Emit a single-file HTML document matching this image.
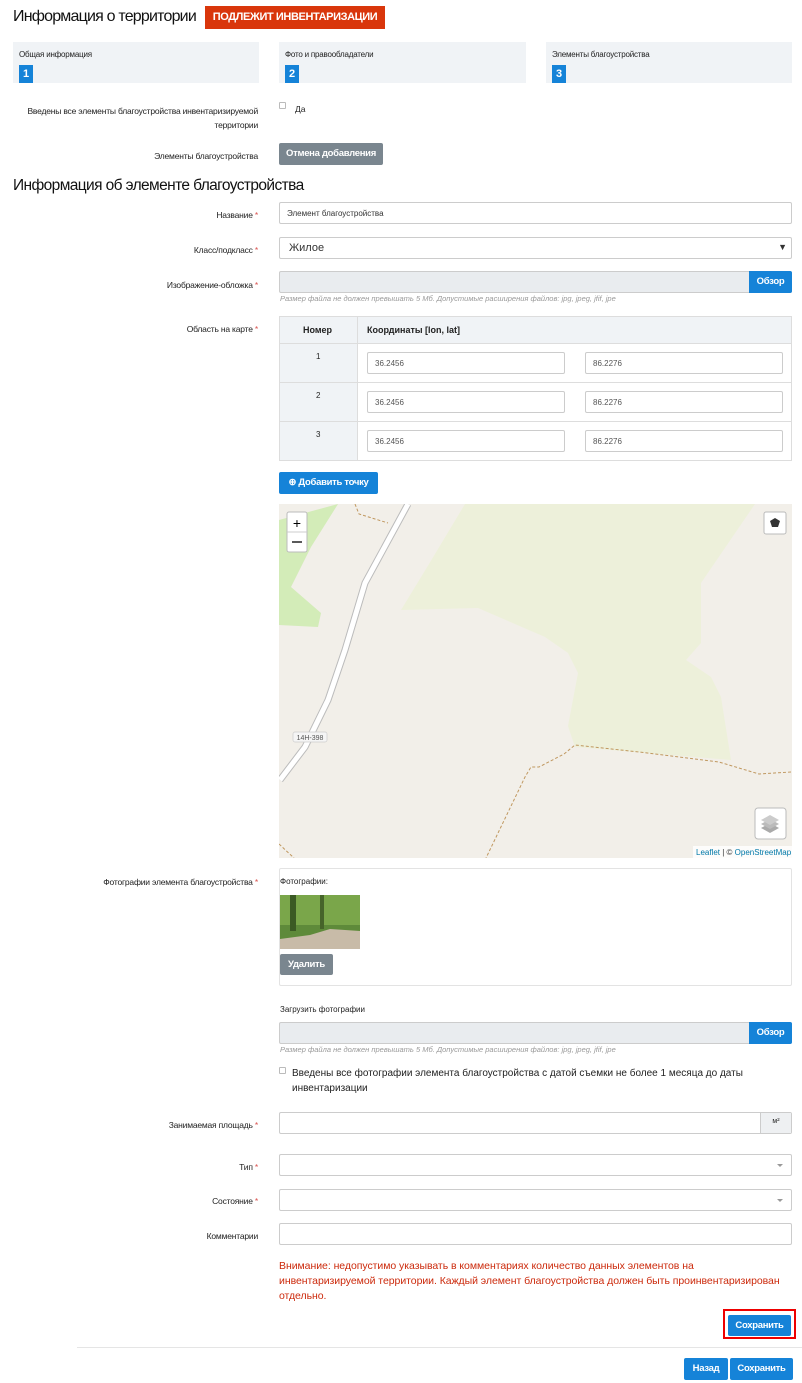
<!DOCTYPE html>
<html><head><meta charset="utf-8"><style>
*{box-sizing:border-box;margin:0;padding:0}
body{width:802px;height:1383px;background:#fff;font-family:"Liberation Sans",sans-serif;color:#222;position:relative;overflow:hidden;font-size:9px}
.a{position:absolute}
.lbl{position:absolute;right:544px;text-align:right;font-size:8.5px;color:#222;letter-spacing:-0.2px}
.lbl i{color:#d9534f;font-style:normal}
.inp{position:absolute;left:279px;width:513px;height:22px;border:1px solid #ccc;border-radius:2px;background:#fff}
.btn{position:absolute;background:#1583d8;color:#fff;font-weight:bold;font-size:9.5px;border-radius:2px;text-align:center;letter-spacing:-0.3px}
.gbtn{position:absolute;background:#7a868f;color:#fff;font-weight:bold;font-size:9.5px;border-radius:2px;text-align:center;letter-spacing:-0.3px}
.step{position:absolute;top:42px;height:41px;background:#f0f3f6;font-size:8px;padding:8px 6px;letter-spacing:-0.2px}
.step b{position:absolute;left:6px;top:23px;width:14px;height:18px;background:#1583d8;color:#fff;font-size:11px;text-align:center;line-height:18px}
.hint{position:absolute;left:280px;font-size:7.5px;font-style:italic;color:#999}
.ci{position:absolute;height:22px;border:1px solid #ccc;border-radius:2px;background:#fff;font-size:8px;color:#555;padding:6px 7px}
.arr{position:absolute;right:8px;top:9px;width:0;height:0;border-left:3px solid transparent;border-right:3px solid transparent;border-top:3px solid #999}
</style></head><body>
<div class="a" style="left:13px;top:8px;font-size:16px;color:#111;letter-spacing:-0.8px;white-space:nowrap">Информация о территории</div>
<div class="a" style="left:205px;top:6px;width:180px;height:23px;background:#d9360b;color:#fff;font-weight:bold;font-size:11px;line-height:23px;text-align:center;letter-spacing:-0.4px">ПОДЛЕЖИТ ИНВЕНТАРИЗАЦИИ</div>
<div class="step" style="left:13px;width:246px">Общая информация<b>1</b></div>
<div class="step" style="left:279px;width:247px">Фото и правообладатели<b>2</b></div>
<div class="step" style="left:546px;width:246px">Элементы благоустройства<b>3</b></div>
<div class="lbl" style="top:104px;line-height:14px;width:260px">Введены все элементы благоустройства инвентаризируемой<br>территории</div>
<div class="a" style="left:279px;top:102px;width:7px;height:7px;border:1px solid #bbb;border-radius:1px"></div>
<div class="a" style="left:295px;top:104px;font-size:8.5px">Да</div>
<div class="lbl" style="top:151px">Элементы благоустройства</div>
<div class="gbtn" style="left:279px;top:143px;width:104px;height:22px;line-height:22px">Отмена добавления</div>
<div class="a" style="left:13px;top:177px;font-size:15.5px;color:#111;letter-spacing:-0.6px">Информация об элементе благоустройства</div>

<div class="lbl" style="top:210px">Название <i>*</i></div>
<div class="inp" style="top:202px;font-size:8px;padding:6px 7px;color:#333">Элемент благоустройства</div>
<div class="lbl" style="top:245px">Класс/подкласс <i>*</i></div>
<div class="inp" style="top:237px;font-size:11px;padding:4px 9px;color:#333">Жилое<span style="position:absolute;right:4px;top:4px;font-size:9px;color:#333">▼</span></div>
<div class="lbl" style="top:280px">Изображение-обложка <i>*</i></div>
<div class="inp" style="top:271px;background:#e9ecef"></div>
<div class="btn" style="left:749px;top:271px;width:43px;height:22px;line-height:22px;border-radius:0 2px 2px 0">Обзор</div>
<div class="hint" style="top:294px">Размер файла не должен превышать 5 Мб. Допустимые расширения файлов: jpg, jpeg, jfif, jpe</div>

<div class="lbl" style="top:324px">Область на карте <i>*</i></div>
<div class="a" style="left:279px;top:316px;width:513px;height:145px;border:1px solid #ddd;background:#f0f3f6"></div>
<div class="a" style="left:357px;top:343px;width:434px;height:117px;background:#fff"></div>
<div class="a" style="left:357px;top:316px;width:1px;height:145px;background:#ddd"></div>
<div class="a" style="left:279px;top:343px;width:513px;height:1px;background:#ddd"></div>
<div class="a" style="left:279px;top:382px;width:513px;height:1px;background:#ddd"></div>
<div class="a" style="left:279px;top:421px;width:513px;height:1px;background:#ddd"></div>
<div class="a" style="left:303px;top:325px;font-weight:bold;font-size:9px">Номер</div>
<div class="a" style="left:367px;top:325px;font-weight:bold;font-size:9px">Координаты [lon, lat]</div>
<div class="a" style="left:316px;top:352px;font-size:8px">1</div>
<div class="a" style="left:316px;top:391px;font-size:8px">2</div>
<div class="a" style="left:316px;top:430px;font-size:8px">3</div>
<div class="ci" style="left:367px;top:352px;width:198px">36.2456</div>
<div class="ci" style="left:585px;top:352px;width:198px">86.2276</div>
<div class="ci" style="left:367px;top:391px;width:198px">36.2456</div>
<div class="ci" style="left:585px;top:391px;width:198px">86.2276</div>
<div class="ci" style="left:367px;top:430px;width:198px">36.2456</div>
<div class="ci" style="left:585px;top:430px;width:198px">86.2276</div>
<div class="btn" style="left:279px;top:472px;width:99px;height:22px;line-height:22px">⊕ Добавить точку</div>

<svg class="a" style="left:279px;top:504px" width="513" height="354" viewBox="0 0 513 354">
<rect width="513" height="354" fill="#f2efe9"/>
<polygon points="186,0 476,0 422,79 422,139 407,156 432,173 442,193 452,256 296,243 289,222 299,169 289,149 266,133 199,104 122,106 150,60" fill="#edf0da"/>
<polygon points="0,16 59,0 32,43 12,83 42,109 39,123 0,121" fill="#d3ecb8"/>
<path d="M129,0 L86,79 L66,146 L49,196 L26,243 L1,276" stroke="#bbb" stroke-width="7" fill="none"/>
<path d="M129,0 L86,79 L66,146 L49,196 L26,243 L1,276" stroke="#fff" stroke-width="5" fill="none"/>
<path d="M76,0 L80,10 L109,19" stroke="#c09860" stroke-width="1" stroke-dasharray="3,2" fill="none"/>
<path d="M512,268 L480,270 L440,258 L360,248 L296,241 L285,250 L260,263 L252,263 L246,273 L207,354" stroke="#c09860" stroke-width="1" stroke-dasharray="3,2" fill="none"/>
<path d="M0,340 L15,354" stroke="#c09860" stroke-width="1" stroke-dasharray="3,2" fill="none"/>
<rect x="14" y="228" width="34" height="10" rx="2" fill="#f5f5f5" stroke="#ccc" stroke-width="0.7"/>
<text x="31" y="236" font-size="7" text-anchor="middle" fill="#555" font-family="Liberation Sans">14H-398</text>
<rect x="8" y="8" width="20" height="40" rx="2" fill="#fff" stroke="#bbb"/>
<line x1="8" y1="28" x2="28" y2="28" stroke="#ccc"/>
<text x="18" y="24" font-size="14" text-anchor="middle" fill="#000" font-family="Liberation Sans">+</text>
<line x1="13" y1="38" x2="23" y2="38" stroke="#000" stroke-width="1.3"/>
<rect x="485" y="8" width="22" height="22" rx="2" fill="#fff" stroke="#bbb"/>
<polygon points="496,14 501,17 499,23 493,23 491,17" fill="#333"/>
<rect x="476" y="304" width="31" height="31" rx="3" fill="#fff" stroke="#bbb"/>
<path d="M482,324 L491,329 L500,324 L491,319Z" fill="#aaa"/>
<path d="M482,320 L491,325 L500,320 L491,315Z" fill="#bbb"/>
<path d="M482,316 L491,321 L500,316 L491,311Z" fill="#ccc"/>
<rect x="414" y="342" width="99" height="12" fill="#fff" opacity="0.8"/>
<text x="417" y="351" font-size="8" fill="#0078a8" font-family="Liberation Sans">Leaflet <tspan fill="#333">| © </tspan>OpenStreetMap</text>
</svg>

<div class="lbl" style="top:877px">Фотографии элемента благоустройства <i>*</i></div>
<div class="a" style="left:279px;top:868px;width:513px;height:118px;border:1px solid #e3e3e3;border-radius:2px"></div>
<div class="a" style="left:280px;top:877px;font-size:8px">Фотографии:</div>
<svg class="a" style="left:280px;top:895px" width="80" height="54">
<rect width="80" height="54" fill="#5e8a3a"/>
<rect x="0" y="0" width="80" height="30" fill="#7aa64a"/>
<rect x="10" y="0" width="6" height="36" fill="#3b5a24"/><rect x="40" y="0" width="4" height="34" fill="#46642a"/>
<polygon points="0,54 80,54 80,36 50,34 30,40 0,44" fill="#c8bba8"/>
</svg>
<div class="gbtn" style="left:280px;top:954px;width:53px;height:21px;line-height:21px">Удалить</div>
<div class="a" style="left:280px;top:1005px;font-size:8px">Загрузить фотографии</div>
<div class="inp" style="top:1022px;background:#e9ecef"></div>
<div class="btn" style="left:749px;top:1022px;width:43px;height:22px;line-height:22px;border-radius:0 2px 2px 0">Обзор</div>
<div class="hint" style="top:1045px">Размер файла не должен превышать 5 Мб. Допустимые расширения файлов: jpg, jpeg, jfif, jpe</div>
<div class="a" style="left:279px;top:1067px;width:7px;height:7px;border:1px solid #bbb;border-radius:1px"></div>
<div class="a" style="left:292px;top:1066px;font-size:10px;line-height:15px;color:#222">Введены все фотографии элемента благоустройства с датой съемки не более 1 месяца до даты<br>инвентаризации</div>

<div class="lbl" style="top:1120px">Занимаемая площадь <i>*</i></div>
<div class="inp" style="top:1112px"></div>
<div class="a" style="left:760px;top:1113px;width:31px;height:20px;background:#eef0f2;border-left:1px solid #ccc;font-size:7px;text-align:center;line-height:18px">м²</div>
<div class="lbl" style="top:1162px">Тип <i>*</i></div>
<div class="inp" style="top:1154px"><div class="arr"></div></div>
<div class="lbl" style="top:1196px">Состояние <i>*</i></div>
<div class="inp" style="top:1189px"><div class="arr"></div></div>
<div class="lbl" style="top:1231px">Комментарии</div>
<div class="inp" style="top:1223px"></div>
<div class="a" style="left:279px;top:1259px;width:530px;font-size:10.5px;line-height:15px;color:#cc2a0c;white-space:nowrap;letter-spacing:-0.05px">Внимание: недопустимо указывать в комментариях количество данных элементов на<br>инвентаризируемой территории. Каждый элемент благоустройства должен быть проинвентаризирован<br>отдельно.</div>
<div class="a" style="left:723px;top:1309px;width:73px;height:30px;border:2px solid #e00"></div>
<div class="btn" style="left:728px;top:1315px;width:63px;height:21px;line-height:21px">Сохранить</div>
<div class="a" style="left:77px;top:1347px;width:725px;height:1px;background:#e5e5e5"></div>
<div class="btn" style="left:684px;top:1358px;width:44px;height:22px;line-height:22px">Назад</div>
<div class="btn" style="left:730px;top:1358px;width:63px;height:22px;line-height:22px">Сохранить</div>
</body></html>
